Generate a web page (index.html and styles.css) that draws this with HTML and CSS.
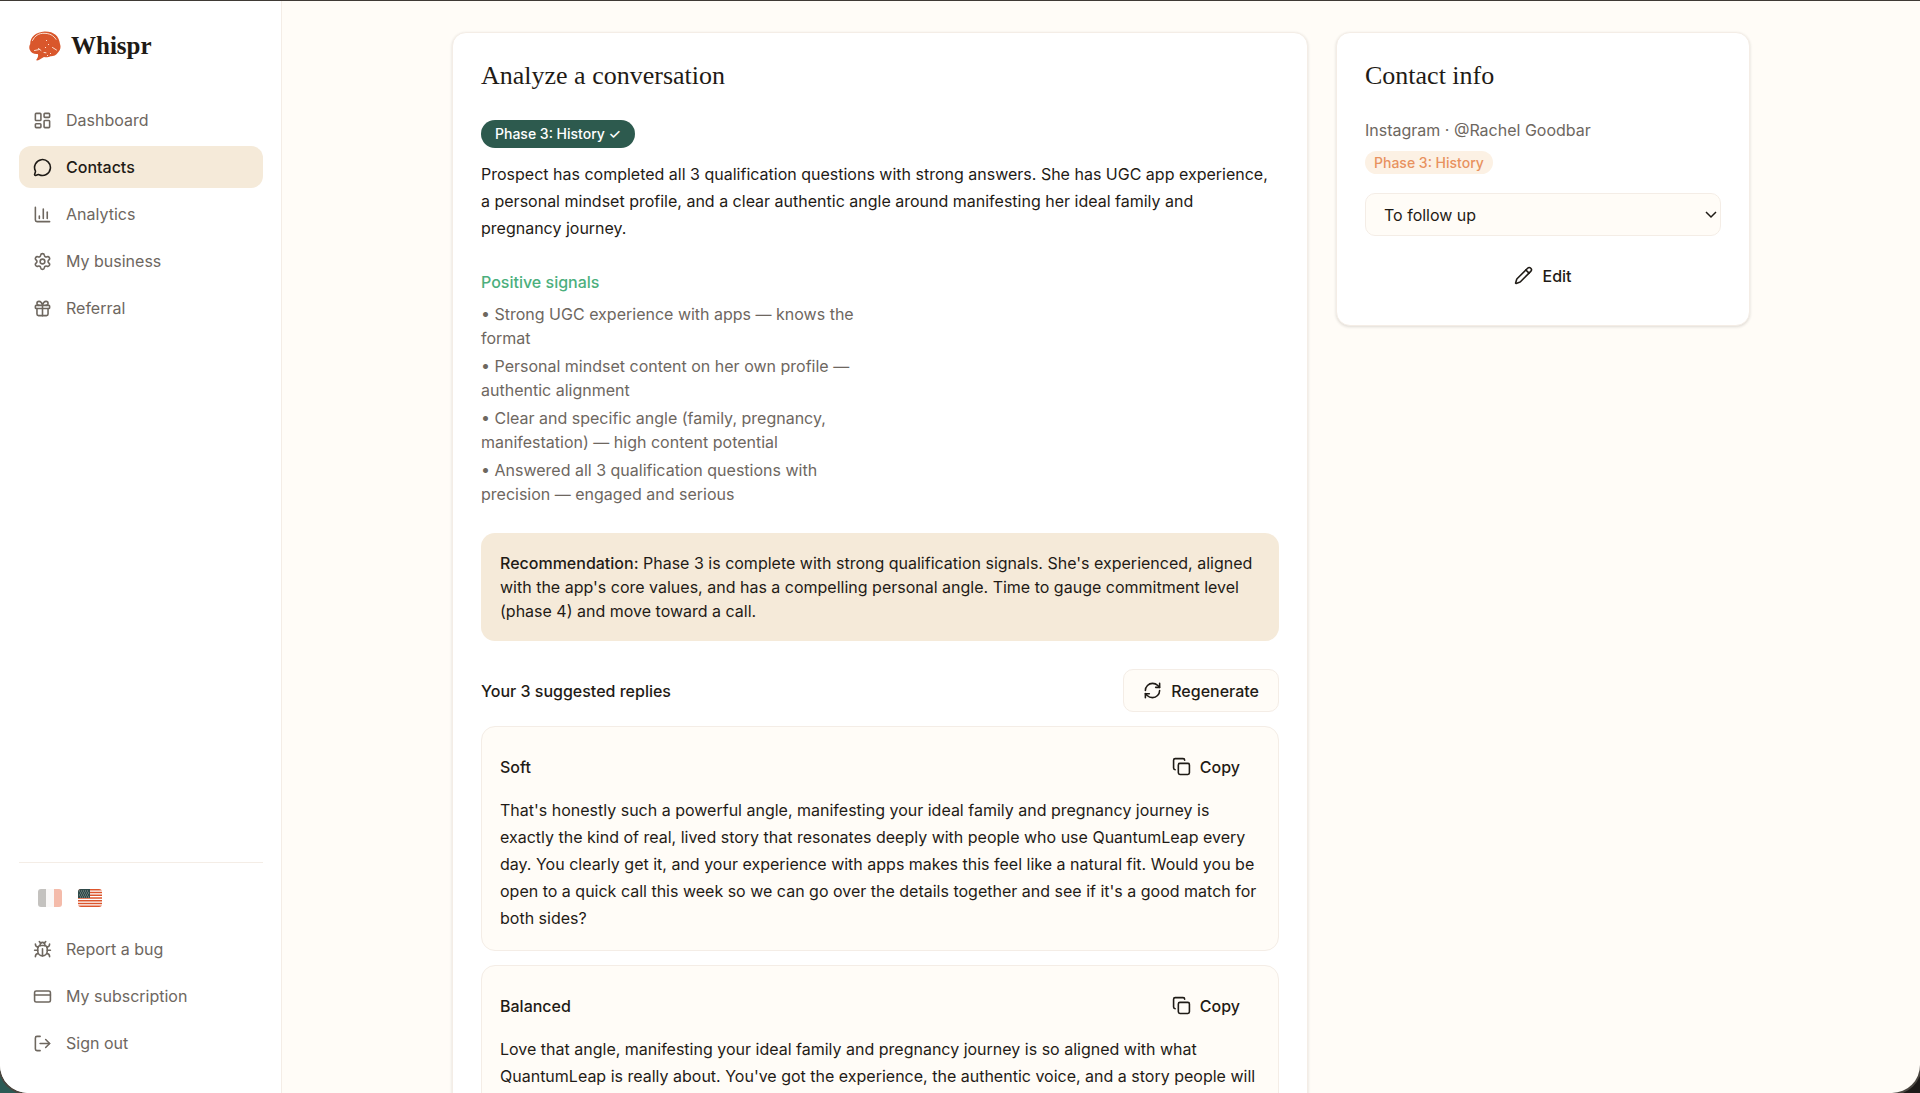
FILE: index.html
```html
<!DOCTYPE html>
<html lang="en">
<head>
    <meta charset="UTF-8">
    <meta name="viewport" content="width=device-width, initial-scale=1.0">
    <title>Whispr - Contacts</title>
    <link rel="stylesheet" href="styles.css">
</head>
<body>
    <div class="app">
        <!-- Sidebar -->
        <aside class="sidebar">
            <a class="logo" href="#">
                <svg class="logo-mark" viewBox="0 0 32 30" aria-hidden="true">
                    <path fill="#d9572c" d="M8 29.500c-1.200 0-.8-1 0-1.800 1.200-1.500 1.400-3.500.8-4.700C5 23.500 2 21.500 1 19.300c-1.300-2.500-.6-4.800.2-6C1 6 7 1 15.500.5 25 .3 30 5 31 13c1.300 3.500 0 6.500-2 8.500-1.800 2.800-5 4-7.500 3.800-2.500 1.300-5 1-6.500.7C12.500 27 10.500 29.600 8 29.500z"/>
                    <path fill="none" stroke="#fbe0d2" stroke-width="1" stroke-linecap="round" d="M3.500 9.500C6 4.500 10 2.200 15 2.300c5.500 0 9.500 2 12 6M5.500 19.500l5-1M9.500 17.500l2.500 2M23.500 16.500l4 2.500M15 21.500l2 .3"/>
                    <path fill="#fbe0d2" d="M17 9h1v1h-1zM19 13h1v1h-1zM16 16h1v1h-1zM21 22h1v1h-1zM18 24h1v1h-1z"/>
                </svg>
                <span>Whispr</span>
            </a>

            <nav class="nav">
                <a class="nav-item" href="#">
                    <svg class="icon" viewBox="0 0 24 24" aria-hidden="true"><rect width="7" height="9" x="3" y="3" rx="1"/><rect width="7" height="5" x="14" y="3" rx="1"/><rect width="7" height="9" x="14" y="12" rx="1"/><rect width="7" height="5" x="3" y="16" rx="1"/></svg>
                    Dashboard
                </a>
                <a class="nav-item active" href="#">
                    <svg class="icon" viewBox="0 0 24 24" aria-hidden="true"><path d="M2.992 16.342a2 2 0 0 1 .094 1.167l-1.065 3.290a1 1 0 0 0 1.236 1.168l3.413-.998a2 2 0 0 1 1.099.092 10 10 0 1 0-4.777-4.719"/></svg>
                    Contacts
                </a>
                <a class="nav-item" href="#">
                    <svg class="icon" viewBox="0 0 24 24" aria-hidden="true"><path d="M3 3v16a2 2 0 0 0 2 2h16"/><path d="M18 17V9"/><path d="M13 17V5"/><path d="M8 17v-3"/></svg>
                    Analytics
                </a>
                <a class="nav-item" href="#">
                    <svg class="icon" viewBox="0 0 24 24" aria-hidden="true"><path d="M9.671 4.136a2.340 2.340 0 0 1 4.659 0 2.340 2.340 0 0 0 3.319 1.915 2.340 2.340 0 0 1 2.330 4.033 2.340 2.340 0 0 0 0 3.831 2.340 2.340 0 0 1-2.330 4.033 2.340 2.340 0 0 0-3.319 1.915 2.340 2.340 0 0 1-4.659 0 2.340 2.340 0 0 0-3.320-1.915 2.340 2.340 0 0 1-2.330-4.033 2.340 2.340 0 0 0 0-3.831A2.340 2.340 0 0 1 6.350 6.051a2.340 2.340 0 0 0 3.319-1.915"/><circle cx="12" cy="12" r="3"/></svg>
                    My business
                </a>
                <a class="nav-item" href="#">
                    <svg class="icon" viewBox="0 0 24 24" aria-hidden="true"><rect x="3" y="8" width="18" height="4" rx="1"/><path d="M12 8v13"/><path d="M19 12v7a2 2 0 0 1-2 2H7a2 2 0 0 1-2-2v-7"/><path d="M7.500 8a2.500 2.500 0 0 1 0-5A4.800 8 0 0 1 12 8a4.800 8 0 0 1 4.500-5 2.500 2.500 0 0 1 0 5"/></svg>
                    Referral
                </a>
            </nav>

            <div class="sidebar-footer">
                <div class="languages">
                    <button class="flag flag-off" type="button" aria-label="Français">
                        <svg viewBox="0 0 24 18" aria-hidden="true"><path fill="#6e6862" d="M0 0h8v18H0z"/><path fill="#f4efec" d="M8 0h8v18H8z"/><path fill="#e4572e" d="M16 0h8v18h-8z"/></svg>
                    </button>
                    <button class="flag" type="button" aria-label="English">
                        <svg viewBox="0 0 24 18" aria-hidden="true"><path fill="#fff" d="M0 0h24v18H0z"/><path stroke="#dc552c" stroke-width="1.400" d="M0 .7h24M0 3.500h24M0 6.200h24M0 9h24M0 11.800h24M0 14.500h24M0 17.300h24"/><path fill="#2f4a4a" d="M0 0h12v9H0z"/><path stroke="#a9b5b0" stroke-width=".8" stroke-dasharray="1 1" d="M1 2h10M2 4h9M1 6h10M2 8h9"/></svg>
                    </button>
                </div>
                <div class="nav">
                    <button class="nav-item" type="button">
                        <svg class="icon" viewBox="0 0 24 24" aria-hidden="true"><path d="m8 2 1.880 1.880"/><path d="M14.120 3.880 16 2"/><path d="M9 7.130v-1a3.003 3.003 0 1 1 6 0v1"/><path d="M12 20c-3.300 0-6-2.700-6-6v-3a4 4 0 0 1 4-4h4a4 4 0 0 1 4 4v3c0 3.300-2.700 6-6 6"/><path d="M12 20v-9"/><path d="M6.530 9C4.600 8.800 3 7.100 3 5"/><path d="M6 13H2"/><path d="M3 21c0-2.100 1.700-3.900 3.800-4"/><path d="M20.970 5c0 2.100-1.600 3.800-3.500 4"/><path d="M22 13h-4"/><path d="M17.200 17c2.100.1 3.800 1.900 3.800 4"/></svg>
                        Report a bug
                    </button>
                    <a class="nav-item" href="#">
                        <svg class="icon" viewBox="0 0 24 24" aria-hidden="true"><rect width="20" height="14" x="2" y="5" rx="2"/><path d="M2 10h20"/></svg>
                        My subscription
                    </a>
                    <button class="nav-item" type="button">
                        <svg class="icon" viewBox="0 0 24 24" aria-hidden="true"><path d="M9 21H5a2 2 0 0 1-2-2V5a2 2 0 0 1 2-2h4"/><path d="m16 17 5-5-5-5"/><path d="M21 12H9"/></svg>
                        Sign out
                    </button>
                </div>
            </div>
        </aside>

        <!-- Conversation analysis -->
        <main class="main">
            <div class="content">
                <section class="card">
                    <h2 class="card-title">Analyze a conversation</h2>
                    <span class="phase-badge">Phase 3: History ✓</span>
                    <p class="text summary">Prospect has completed all 3 qualification questions with strong answers. She has UGC app experience, a personal mindset profile, and a clear authentic angle around manifesting her ideal family and pregnancy journey.</p>

                    <div class="signals">
                        <div>
                            <h3 class="signals-title">Positive signals</h3>
                            <ul class="signals-list">
                                <li>• Strong UGC experience with apps — knows the format</li>
                                <li>• Personal mindset content on her own profile — authentic alignment</li>
                                <li>• Clear and specific angle (family, pregnancy, manifestation) — high content potential</li>
                                <li>• Answered all 3 qualification questions with precision — engaged and serious</li>
                            </ul>
                        </div>
                    </div>

                    <p class="recommendation"><strong>Recommendation:</strong> Phase 3 is complete with strong qualification signals. She's experienced, aligned with the app's core values, and has a compelling personal angle. Time to gauge commitment level (phase 4) and move toward a call.</p>

                    <div class="replies-header">
                        <h3 class="label">Your 3 suggested replies</h3>
                        <button class="button button-outline" type="button">
                            <svg class="icon" viewBox="0 0 24 24" aria-hidden="true"><path d="M3 12a9 9 0 0 1 9-9 9.750 9.750 0 0 1 6.740 2.740L21 8"/><path d="M21 3v5h-5"/><path d="M21 12a9 9 0 0 1-9 9 9.750 9.750 0 0 1-6.740-2.740L3 16"/><path d="M8 16H3v5"/></svg>
                            Regenerate
                        </button>
                    </div>

                    <div class="replies">
                        <article class="reply">
                            <div class="reply-header">
                                <h4 class="label">Soft</h4>
                                <button class="button" type="button">
                                    <svg class="icon" viewBox="0 0 24 24" aria-hidden="true"><rect width="14" height="14" x="8" y="8" rx="2"/><path d="M4 16c-1.100 0-2-.9-2-2V4c0-1.100.9-2 2-2h10c1.100 0 2 .9 2 2"/></svg>
                                    Copy
                                </button>
                            </div>
                            <p class="text">That's honestly such a powerful angle, manifesting your ideal family and pregnancy journey is exactly the kind of real, lived story that resonates deeply with people who use QuantumLeap every day. You clearly get it, and your experience with apps makes this feel like a natural fit. Would you be open to a quick call this week so we can go over the details together and see if it's a good match for both sides?</p>
                        </article>
                        <article class="reply">
                            <div class="reply-header">
                                <h4 class="label">Balanced</h4>
                                <button class="button" type="button">
                                    <svg class="icon" viewBox="0 0 24 24" aria-hidden="true"><rect width="14" height="14" x="8" y="8" rx="2"/><path d="M4 16c-1.100 0-2-.9-2-2V4c0-1.100.9-2 2-2h10c1.100 0 2 .9 2 2"/></svg>
                                    Copy
                                </button>
                            </div>
                            <p class="text">Love that angle, manifesting your ideal family and pregnancy journey is so aligned with what QuantumLeap is really about. You've got the experience, the authentic voice, and a story people will</p>
                        </article>
                    </div>
                </section>

                <!-- Contact info -->
                <section class="card">
                    <h2 class="card-title">Contact info</h2>
                    <p class="contact-handle">Instagram · @Rachel Goodbar</p>
                    <span class="phase-tag">Phase 3: History</span>
                    <div class="select-wrap">
                        <select class="select" aria-label="Contact status">
                            <option>To follow up</option>
                        </select>
                        <svg class="select-arrow" viewBox="0 0 12 8" aria-hidden="true"><path d="M1 1l5 5 5-5"/></svg>
                    </div>
                    <button class="button button-full" type="button">
                        <svg class="icon" viewBox="0 0 24 24" aria-hidden="true"><path d="M21.174 6.812a1 1 0 0 0-3.986-3.987L3.842 16.174a2 2 0 0 0-.5.830l-1.321 4.352a.5.5 0 0 0 .623.622l4.353-1.320a2 2 0 0 0 .830-.497z"/><path d="m15 5 4 4"/></svg>
                        Edit
                    </button>
                </section>
            </div>
        </main>
    </div>
</body>
</html>
```

FILE: styles.css
```css
* {
    box-sizing: border-box;
}
body {
    margin: 0;
    background: linear-gradient(to right, #2c5a55 40px, #1d1a18 40px);
    color: #1f1b16;
    font-family: "Inter", "Open Sans", sans-serif;
    font-size: 16px;
    line-height: 24px;
}
h2, h3, h4, p, ul {
    margin: 0;
    padding: 0;
}
button, select {
    font: inherit;
    color: inherit;
}
.app {
    display: flex;
    height: 100vh;
    overflow: hidden;
    background: #fffcf7;
    border-top: 1px solid #3f3a35;
    border-radius: 0 0 28px 28px;
    box-shadow: 0 0 0 2px #4a4640;
}
.icon {
    width: 19px;
    height: 19px;
    flex-shrink: 0;
    fill: none;
    stroke: currentColor;
    stroke-width: 2;
    stroke-linecap: round;
    stroke-linejoin: round;
}

/* Sidebar */
.sidebar {
    display: flex;
    flex-direction: column;
    width: 282px;
    flex-shrink: 0;
    padding: 27px 18px 29px 19px;
    background: #fff;
    border-right: 1px solid #f4ede6;
}
.logo {
    display: flex;
    align-items: center;
    gap: 10px;
    padding: 0 10px;
    color: #1f1b16;
    font-family: "Liberation Serif", serif;
    font-size: 25px;
    font-weight: bold;
    line-height: 36px;
    text-decoration: none;
}
.logo-mark {
    width: 32px;
    height: 30px;
}
.nav {
    display: flex;
    flex-direction: column;
    gap: 5px;
}
.logo + .nav {
    margin-top: 35px;
}
.nav-item {
    display: flex;
    align-items: center;
    gap: 14px;
    height: 42px;
    padding: 0 14px;
    border: 0;
    border-radius: 12px;
    background: none;
    color: #6e675f;
    text-align: left;
    text-decoration: none;
    cursor: pointer;
}
.nav-item.active {
    background: #f5ead9;
    color: #1f1b16;
    font-weight: 500;
}
.sidebar-footer {
    margin-top: auto;
    padding-top: 26px;
    border-top: 1px solid #f4ede6;
}
.languages {
    display: flex;
    gap: 16px;
    padding: 0 19px;
    margin-bottom: 21px;
}
.flag {
    display: flex;
    width: 24px;
    height: 18px;
    padding: 0;
    border: 0;
    border-radius: 3px;
    background: none;
    overflow: hidden;
    cursor: pointer;
}
.flag-off {
    opacity: 0.4;
}

/* Main area */
.main {
    flex: 1;
    padding: 31px 28px;
}
.content {
    display: grid;
    grid-template-columns: minmax(0, 1fr) 414px;
    align-items: start;
    gap: 28px;
    max-width: 1298px;
    margin: 0 auto;
}
.card {
    padding: 28px;
    background: #fff;
    border: 1px solid #f4ede6;
    border-radius: 14px;
    box-shadow: 0 1px 3px rgba(31, 27, 22, 0.15);
}
.card-title {
    margin-bottom: 27px;
    font-family: "Liberation Serif", serif;
    font-size: 26px;
    font-weight: normal;
    line-height: 30px;
}
.text {
    line-height: 27px;
}
.phase-badge {
    display: block;
    width: fit-content;
    margin-top: 29px;
    padding: 0 14px;
    border-radius: 14px;
    background: #2d5a4e;
    color: #fff;
    font-size: 14px;
    font-weight: 500;
    line-height: 28px;
}
.summary {
    max-width: 792px;
    margin-top: 13px;
}
.signals {
    display: grid;
    grid-template-columns: 1fr 1fr;
    gap: 28px;
    margin: 28px 0 27px;
}
.signals-title {
    margin-bottom: 8px;
    color: #4caf7d;
    font-size: 16px;
    font-weight: 500;
}
.signals-list {
    display: grid;
    gap: 4px;
    list-style: none;
    color: #6e675f;
}
.recommendation {
    padding: 18px 19px;
    border-radius: 14px;
    background: #f5ead9;
}
.recommendation strong {
    font-weight: 500;
}
.replies-header, .reply-header {
    display: flex;
    justify-content: space-between;
    align-items: center;
}
.replies-header {
    margin: 28px 0 14px;
}
.label {
    font-size: 16px;
    font-weight: 500;
}
.button {
    display: flex;
    align-items: center;
    justify-content: center;
    gap: 9px;
    height: 43px;
    padding: 0 19px;
    border: 1px solid transparent;
    border-radius: 10px;
    background: none;
    font-weight: 500;
    cursor: pointer;
}
.button-outline {
    border-color: #f4ede6;
    background: #fffcf7;
}
.button-full {
    width: 100%;
}
.replies {
    display: grid;
    gap: 14px;
}
.reply {
    padding: 18px;
    border: 1px solid #f4ede6;
    border-radius: 14px;
    background: #fffcf7;
}
.reply-header {
    margin-bottom: 9px;
}

/* Contact card */
.contact-handle {
    margin-bottom: 9px;
    color: #6e675f;
}
.phase-tag {
    display: block;
    width: fit-content;
    padding: 0 9px;
    border-radius: 12px;
    background: #fcf1e4;
    color: #e8925f;
    font-size: 14px;
    font-weight: 500;
    line-height: 23px;
}
.select-wrap {
    position: relative;
    margin: 19px 0 18px;
}
.select {
    display: block;
    width: 100%;
    height: 43px;
    padding: 0 18px;
    border: 1px solid #f4ede6;
    border-radius: 10px;
    background: #fffcf7;
    appearance: none;
}
.select-arrow {
    position: absolute;
    top: 18px;
    right: 4px;
    width: 12px;
    height: 8px;
    fill: none;
    stroke: #1f1b16;
    stroke-width: 1.500;
    pointer-events: none;
}
```
